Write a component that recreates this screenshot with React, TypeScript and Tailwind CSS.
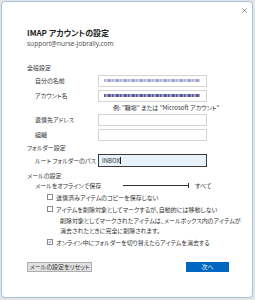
import React from 'react';

const font = { fontFamily: '"Noto Sans CJK JP", "Noto Sans", sans-serif', fontFeatureSettings: '"palt"' };

function Field({ label, blur }: { label: string; blur?: string }) {
  return (
    <div className="flex items-center h-[15px]">
      <span className="w-[71px] shrink-0 pl-[8px] text-[6px] text-[#333] whitespace-nowrap">{label}</span>
      <div className="w-[109px] h-[12px] border border-[#d4d4d4] bg-white flex items-center px-[5px]">
        {blur && <div className={`h-[3px] w-[96px] ${blur}`} />}
      </div>
    </div>
  );
}

function Check({ checked, children }: { checked?: boolean; children: React.ReactNode }) {
  return (
    <div className="flex items-center gap-[3px] pl-[20px] h-[12px]">
      <div className="w-[6px] h-[6px] border border-[#8a8a8a] bg-white flex items-center justify-center">
        {checked && (
          <svg viewBox="0 0 8 8" className="w-[6px] h-[6px]">
            <path d="M1.2 4.2 L3.2 6 L6.8 1.8" fill="none" stroke="#1a5fb4" strokeWidth={1.4} />
          </svg>
        )}
      </div>
      <span className="text-[6px] text-[#333] whitespace-nowrap">{children}</span>
    </div>
  );
}

export default function App() {
  return (
    <div className="w-[255px] h-[300px] bg-[#e4e4e4] overflow-hidden pt-[1px] pl-[1px]" style={font}>
      <div className="w-[252px] h-[297px] bg-white border border-[#a4c2e0] rounded-[4px] flex flex-col relative">
        <svg viewBox="0 0 8 8" className="absolute right-[5px] top-[6px] w-[5px] h-[5px]">
          <path d="M0.5 0.5 L7.5 7.5 M7.5 0.5 L0.5 7.5" stroke="#555" strokeWidth={1} />
        </svg>
        <div className="pl-[25px] pt-[25px]">
          <div className="text-[8px] font-bold text-[#222] leading-[12px] whitespace-nowrap">IMAP アカウントの設定</div>
          <div className="text-[6.5px] text-[#555] leading-[10px]" style={{ fontFamily: '"Noto Sans", sans-serif' }}>
            support@nurse-jobrally.com
          </div>

          <div className="mt-[14px] text-[6px] text-[#333] leading-[10px]">全般設定</div>
          <Field label="自分の名前" blur="bg-[repeating-linear-gradient(90deg,#9fb3e0_0px,#d8cfe6_3px,#7f94cc_5px,#e3d7dc_8px)]" />
          <Field label="アカウント名" blur="bg-[repeating-linear-gradient(90deg,#3e4f9a_0px,#b9b3d8_3px,#2b3c86_5px,#c9a7c3_8px)]" />
          <div className="pl-[86px] text-[6px] text-[#333] leading-[9px] whitespace-nowrap">例: "職場" または "Microsoft アカウント"</div>
          <Field label="返信先アドレス" />
          <Field label="組織" />

          <div className="mt-[1px] text-[6px] text-[#333] leading-[10px]">フォルダー設定</div>
          <div className="flex items-center h-[15px]">
            <span className="w-[71px] shrink-0 pl-[8px] text-[6px] text-[#333] whitespace-nowrap">ルート フォルダーのパス</span>
            <div className="w-[109px] h-[13px] border-[1.5px] border-[#3a3a3a] bg-[#e8f2fb] flex items-center px-[3px] text-[6px] text-[#333]">
              INBOX<span className="w-px h-[7px] bg-[#222]" />
            </div>
          </div>

          <div className="mt-[3px] text-[6px] text-[#333] leading-[10px]">メールの設定</div>
          <div className="flex items-center h-[9px]">
            <span className="w-[96px] shrink-0 pl-[8px] text-[6px] text-[#333] whitespace-nowrap">メールをオフラインで保存</span>
            <div className="w-[65px] h-px bg-[#333]" />
            <div className="w-px h-[5px] bg-[#333]" />
            <span className="ml-[6px] text-[6px] text-[#333] whitespace-nowrap">すべて</span>
          </div>
          <div className="mt-[1px]">
            <Check>送信済みアイテムのコピーを保存しない</Check>
            <Check>アイテムを削除対象としてマークするが、自動的には移動しない</Check>
          </div>
          <div className="mt-[1px] pl-[33px] text-[6px] text-[#333] leading-[10px] whitespace-nowrap">
            削除対象としてマークされたアイテムは、メールボックス内のアイテムが
            <br />
            消去されたときに完全に削除されます。
          </div>
          <Check checked>オンライン中にフォルダーを切り替えたらアイテムを消去する</Check>
        </div>

        <div className="flex justify-between items-center pl-[25px] pr-[23px] mt-[14px]">
          <button className="w-[65px] h-[10px] bg-[#e1e1e1] border border-[#adadad] text-[6px] text-[#333] leading-none whitespace-nowrap">
            メールの設定をリセット
          </button>
          <button className="w-[43px] h-[10px] bg-[#0067c0] text-[6px] text-white leading-none">次へ</button>
        </div>
      </div>
    </div>
  );
}
